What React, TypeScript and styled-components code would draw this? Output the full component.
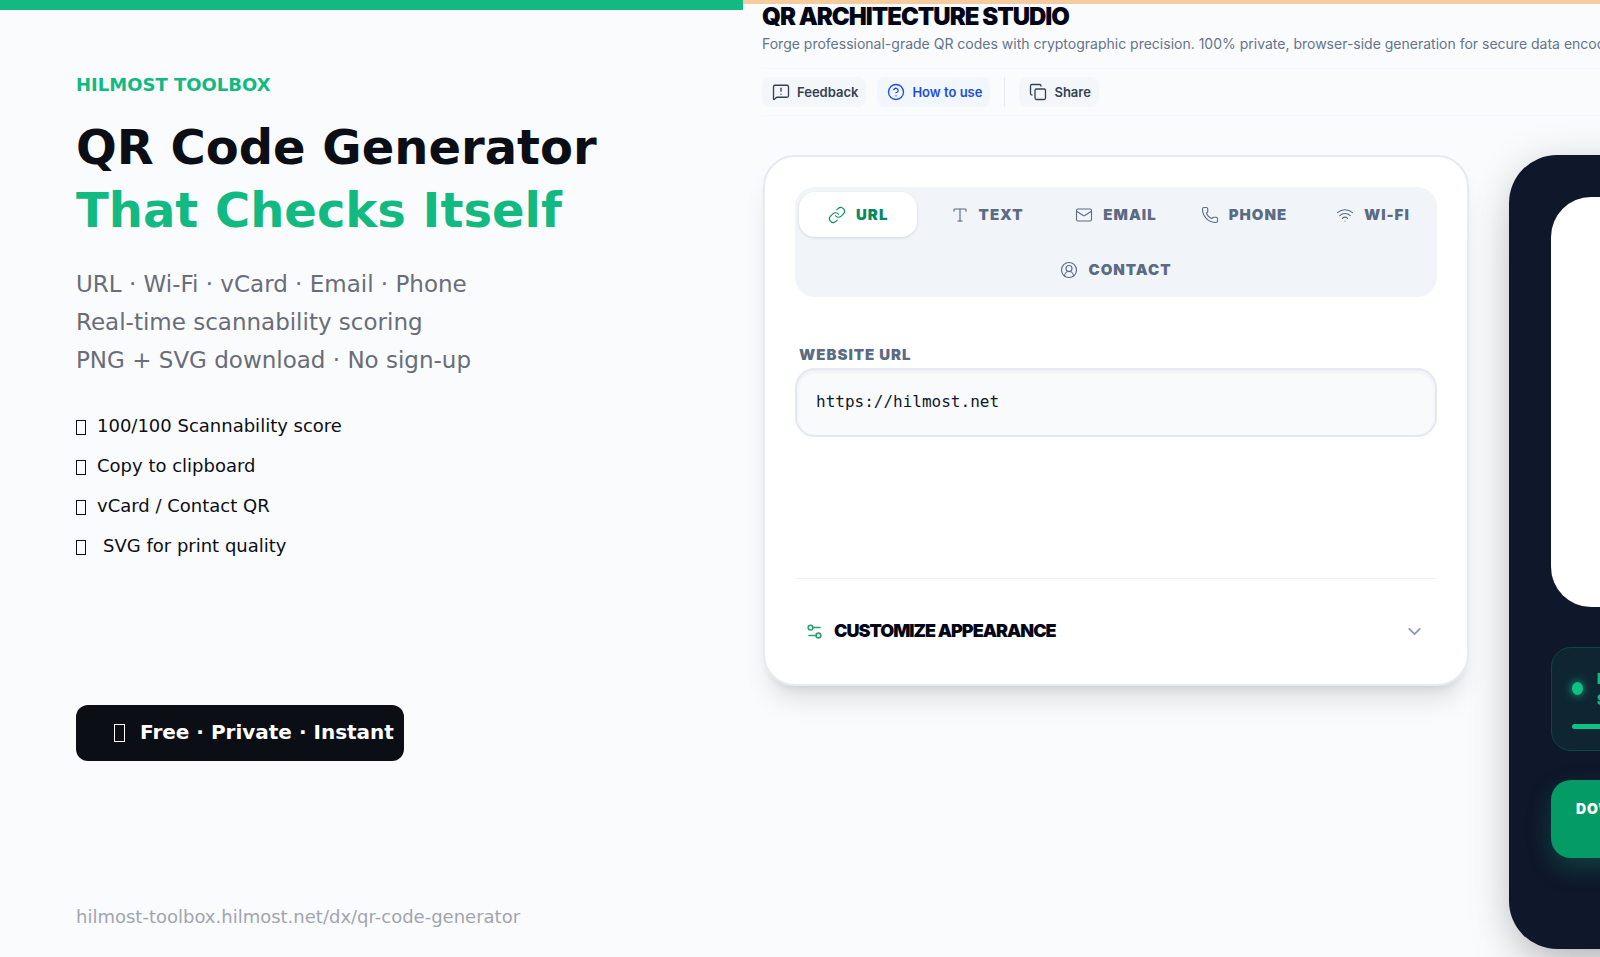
import React from "react";
import styled, { createGlobalStyle } from "styled-components";
import {
  MessageSquareWarning, CircleHelp, Copy, Link, Type, Mail, Phone, Wifi, CircleUserRound, Settings2, ChevronDown,
} from "lucide-react";

const Global = createGlobalStyle`
  *, *::before, *::after { box-sizing: border-box; }
  html, body, #root { height: 100%; }
  body { margin: 0; background: #fafbfd; overflow: hidden; font-family: Inter, sans-serif; }
  h1, h2, p, ul { margin: 0; padding: 0; }
  button, input { font: inherit; }
`;

const Page = styled.div`
  display: grid;
  grid-template-columns: minmax(0, 743fr) minmax(0, 857fr);
  min-height: 100vh;
`;

const Intro = styled.section`
  display: flex;
  flex-direction: column;
  align-items: flex-start;
  border-top: 10px solid #12b981;
  padding: 64px 0 28px 76px;
  font-family: "DejaVu Sans", sans-serif;
  color: #0b0e14;
`;

const Brand = styled.p`
  font-size: 18px;
  line-height: 22px;
  font-weight: 700;
  color: #12b981;
`;

const Headline = styled.h1`
  margin-top: 20px;
  font-size: 48px;
  line-height: 63px;
  font-weight: 700;
  white-space: nowrap;
`;

const Accent = styled.span`
  display: block;
  color: #12b981;
`;

const Summary = styled.p`
  margin-top: 23px;
  font-size: 23px;
  line-height: 38px;
  color: #696d78;
`;

const Features = styled.ul`
  margin-top: 27px;
  list-style: none;
`;

const Feature = styled.li<{ $wide?: boolean }>`
  display: flex;
  align-items: center;
  gap: ${(p) => (p.$wide ? 17 : 11)}px;
  font-size: 18px;
  line-height: 40px;
`;

const Glyph = styled.span<{ $large?: boolean }>`
  width: ${(p) => (p.$large ? 11 : 10)}px;
  height: ${(p) => (p.$large ? 18 : 15)}px;
  margin-top: 2px;
  border: 1px solid currentColor;
`;

const Pill = styled.div`
  display: flex;
  align-items: center;
  gap: 15px;
  height: 56px;
  margin-top: 139px;
  padding: 0 10px 3px 38px;
  border-radius: 12px;
  background: #0b0e14;
  color: #fff;
  font-size: 20px;
  font-weight: 700;
  white-space: nowrap;
`;

const Address = styled.a`
  margin-top: auto;
  font-size: 18px;
  line-height: 24px;
  color: #a1a5ae;
  text-decoration: none;
`;

const Studio = styled.section`
  min-width: 0;
  overflow: hidden;
  border-top: 4px solid #f4cc9f;
  padding-left: 19px;
`;

const StudioTitle = styled.h2`
  font-size: 24px;
  line-height: 26px;
  font-weight: 900;
  letter-spacing: -1px;
  color: #020617;
`;

const Tagline = styled.p`
  margin-top: 2px;
  font-size: 14px;
  line-height: 24px;
  color: #64748b;
  white-space: nowrap;
`;

const Toolbar = styled.div`
  display: flex;
  align-items: center;
  height: 48px;
  margin-top: 12px;
  border-top: 1px solid #f5f7fa;
  border-bottom: 1px solid #f5f7fa;
`;

const ToolButton = styled.button<{ $primary?: boolean }>`
  display: flex;
  align-items: center;
  gap: 7px;
  height: 30px;
  margin-right: 11px;
  padding: 0 8px 0 10px;
  border: 0;
  border-radius: 8px;
  background: ${(p) => (p.$primary ? "#f2f6fe" : "#f4f7f9")};
  color: ${(p) => (p.$primary ? "#1d4ed8" : "#334155")};
  font-size: 13px;
  font-weight: 600;
`;

const Divider = styled.span`
  width: 1px;
  height: 30px;
  margin: 0 14px 0 3px;
  background: #e8ecf2;
`;

const Workspace = styled.div`
  display: flex;
  align-items: flex-start;
  gap: 40px;
  margin-top: 39px;
  padding-left: 1px;
`;

const Editor = styled.form`
  flex: 1 0 706px;
  padding: 30px 30px 41px;
  border: 2px solid #e7eaf0;
  border-radius: 32px;
  background: #fff;
  box-shadow: 0 20px 25px -5px rgba(0, 0, 0, 0.1), 0 8px 10px -6px rgba(0, 0, 0, 0.1);
`;

const Tabs = styled.div`
  display: flex;
  flex-wrap: wrap;
  gap: 10px 4px;
  padding: 5px 4px;
  border-radius: 20px;
  background: #f1f5f9;
`;

const Tab = styled.button<{ $active?: boolean; $basis: number }>`
  display: flex;
  flex: 1 0 ${(p) => p.$basis}px;
  align-items: center;
  justify-content: center;
  gap: 10px;
  height: 45px;
  padding: 0;
  border: 0;
  border-radius: 16px;
  background: ${(p) => (p.$active ? "#fff" : "transparent")};
  box-shadow: ${(p) => (p.$active ? "0 1px 3px rgba(0, 0, 0, 0.12)" : "none")};
  color: ${(p) => (p.$active ? "#058a5b" : "#5b6b84")};
  font-size: 15px;
  font-weight: 900;
  letter-spacing: 1px;
`;

const Label = styled.label`
  display: block;
  margin: 48px 0 3px 4px;
  font-size: 15px;
  line-height: 20px;
  font-weight: 900;
  letter-spacing: 1px;
  color: #5b6b84;
`;

const UrlInput = styled.input`
  display: block;
  width: 100%;
  height: 69px;
  padding: 0 19px 2px;
  border: 2px solid #e4e8f0;
  border-radius: 20px;
  background: #f9fafc;
  box-shadow: inset 0 2px 4px rgba(0, 0, 0, 0.05);
  color: #0f172a;
  font-family: "DejaVu Sans Mono", monospace;
  font-size: 16px;
`;

const Customize = styled.button`
  display: flex;
  align-items: center;
  gap: 10px;
  width: 100%;
  margin-top: 141px;
  padding: 40px 12px 0 10px;
  border: 0;
  border-top: 1px solid #eff2f5;
  background: none;
  color: #020617;
  font-size: 18px;
  line-height: 24px;
  font-weight: 900;
  letter-spacing: -1px;
`;

const CustomizeText = styled.span`
  flex: 1;
  text-align: left;
`;

const Preview = styled.aside`
  flex: 0 0 420px;
  padding: 42px 42px 91px;
  border-radius: 48px;
  background: #0f172a;
  box-shadow: 0 25px 50px -12px rgba(0, 0, 0, 0.25), 0 0 40px rgba(0, 0, 0, 0.1);
`;

const CodeArea = styled.div`
  height: 410px;
  border-radius: 40px;
  background: #fff;
`;

const Score = styled.div`
  display: grid;
  grid-template-columns: auto 1fr;
  align-items: center;
  gap: 13px 14px;
  height: 104px;
  margin-top: 40px;
  padding: 19px 20px 20px;
  border: 1px solid #0b493f;
  border-radius: 20px;
  background: #0f2632;
  color: #10b981;
  font-size: 14px;
  line-height: 21px;
  font-weight: 900;
`;

const Dot = styled.span`
  width: 11px;
  height: 13px;
  border-radius: 50%;
  background: #0fc184;
  box-shadow: 0 0 8px #10b981;
`;

const Meter = styled.span`
  grid-column: 1 / -1;
  height: 5px;
  border-radius: 4px;
  background: #0fc184;
`;

const Download = styled.button`
  display: block;
  width: 100%;
  height: 78px;
  margin-top: 29px;
  padding: 0 24px 22px 25px;
  border: 0;
  border-radius: 20px;
  background: #059b66;
  box-shadow: 0 10px 24px rgba(16, 185, 129, 0.25);
  color: #fff;
  font-size: 14px;
  font-weight: 900;
  letter-spacing: 1px;
  text-align: left;
`;

const tabs = [
  { name: "URL", Icon: Link, basis: 118 },
  { name: "TEXT", Icon: Type, basis: 131 },
  { name: "EMAIL", Icon: Mail, basis: 118 },
  { name: "PHONE", Icon: Phone, basis: 129 },
  { name: "WI-FI", Icon: Wifi, basis: 120 },
  { name: "CONTACT", Icon: CircleUserRound, basis: 144 },
];

const features = ["100/100 Scannability score", "Copy to clipboard", "vCard / Contact QR", "SVG for print quality"];

export default function App() {
  return (
    <Page>
      <Global />
      <Intro>
        <Brand>HILMOST TOOLBOX</Brand>
        <Headline>
          QR Code Generator
          <Accent>That Checks Itself</Accent>
        </Headline>
        <Summary>
          URL · Wi-Fi · vCard · Email · Phone
          <br />
          Real-time scannability scoring
          <br />
          PNG + SVG download · No sign-up
        </Summary>
        <Features>
          {features.map((text, i) => (
            <Feature key={text} $wide={i === 3}>
              <Glyph />
              {text}
            </Feature>
          ))}
        </Features>
        <Pill>
          <Glyph $large />
          Free · Private · Instant
        </Pill>
        <Address href="#">hilmost-toolbox.hilmost.net/dx/qr-code-generator</Address>
      </Intro>
      <Studio>
        <StudioTitle>QR ARCHITECTURE STUDIO</StudioTitle>
        <Tagline>
          Forge professional-grade QR codes with cryptographic precision. 100% private, browser-side generation for secure data encoding.
        </Tagline>
        <Toolbar>
          <ToolButton><MessageSquareWarning size={18} strokeWidth={1.75} />Feedback</ToolButton>
          <ToolButton $primary><CircleHelp size={18} strokeWidth={1.75} />How to use</ToolButton>
          <Divider />
          <ToolButton><Copy size={18} strokeWidth={1.75} />Share</ToolButton>
        </Toolbar>
        <Workspace>
          <Editor>
            <Tabs>
              {tabs.map(({ name, Icon, basis }, i) => (
                <Tab type="button" key={name} $active={i === 0} $basis={basis}>
                  <Icon size={18} strokeWidth={1.5} />
                  {name}
                </Tab>
              ))}
            </Tabs>
            <Label htmlFor="url">WEBSITE URL</Label>
            <UrlInput id="url" defaultValue="https://hilmost.net" />
            <Customize type="button">
              <Settings2 size={19} color="#2f9e74" />
              <CustomizeText>CUSTOMIZE APPEARANCE</CustomizeText>
              <ChevronDown size={21} color="#8f93b5" />
            </Customize>
          </Editor>
          <Preview>
            <CodeArea />
            <Score>
              <Dot />
              <span>EXCELLENT<br />SCANNABILITY</span>
              <Meter />
            </Score>
            <Download>DOWNLOAD</Download>
          </Preview>
        </Workspace>
      </Studio>
    </Page>
  );
}
